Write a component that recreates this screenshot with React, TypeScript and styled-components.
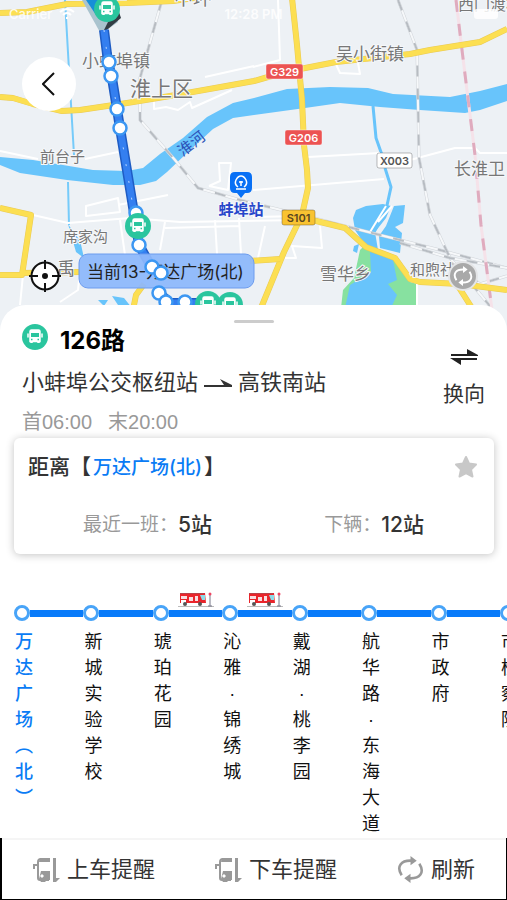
import React from "react";
import styled, { createGlobalStyle } from "styled-components";

const GlobalStyle = createGlobalStyle`
  *, *::before, *::after { box-sizing: border-box; }
  body {
    margin: 0;
    background: #fff;
    color: #333;
    font-family: "Liberation Sans", "Noto Sans CJK SC", sans-serif;
  }
  button {
    padding: 0;
    border: 0;
    background: none;
    color: inherit;
    font: inherit;
    cursor: pointer;
  }
  svg { display: block; flex: none; }
`;

const Screen = styled.main`
  display: flex;
  flex-direction: column;
  min-height: 100vh;
  overflow: hidden;
`;

const MapArea = styled.section`
  position: relative;
  height: 345px;
  overflow: hidden;
  background: #edf1f5;
`;

const MapDrawing = styled.svg`
  width: 100%;
  height: 100%;
  font-family: "Liberation Sans", "Noto Sans CJK SC", sans-serif;
`;

const StatusBar = styled.div`
  position: absolute;
  inset: 0 0 auto;
  display: grid;
  grid-template-columns: 1fr auto 1fr;
  align-items: center;
  height: 28px;
  padding: 0 9px;
  color: rgba(255, 255, 255, 0.85);
  font: 600 13px/16px Inter, "Liberation Sans", sans-serif;
`;

const Carrier = styled.span`
  display: flex;
  align-items: center;
  gap: 7px;
  font-weight: 500;
`;

const Battery = styled.span`
  justify-self: end;
  width: 24px;
  height: 10px;
  border-radius: 3px;
  background: rgba(255, 255, 255, 0.85);
`;

const FloatingButton = styled.button<{ $place: "back" | "locate" | "reload" }>`
  position: absolute;
  display: grid;
  place-items: center;
  border-radius: 50%;
  ${({ $place }) =>
    $place === "back"
      ? "left: 22px; top: 57px; width: 54px; height: 54px; background: #fff;"
      : $place === "locate"
        ? "left: 28px; top: 259px; width: 34px; height: 34px;"
        : "right: 29px; top: 261px; width: 30px; height: 30px; background: #a9a9a9; border: 2px solid #e4e5e7;"}
`;

const Sheet = styled.section`
  position: relative;
  z-index: 1;
  display: flex;
  flex: 1;
  flex-direction: column;
  margin-top: -40px;
  border-radius: 26px 26px 0 0;
  background: #fff;
`;

const Handle = styled.div`
  width: 40px;
  height: 3px;
  margin: 15px auto 1px;
  border-radius: 2px;
  background: #ccc;
`;

const Header = styled.header`
  display: flex;
  align-items: center;
  justify-content: space-between;
  padding: 0 22px;
`;

const RouteInfo = styled.div`
  display: flex;
  flex-direction: column;
  gap: 12px;
`;

const TitleRow = styled.div`
  display: flex;
  gap: 12px;
  height: 32px;
`;

const RouteName = styled.h1`
  margin: 0;
  color: #000;
  font: 700 24px/34px Inter, "Noto Sans CJK SC", sans-serif;
`;

const Terminals = styled.p`
  display: flex;
  align-items: center;
  gap: 6px;
  margin: 0;
  font-size: 22px;
  line-height: 30px;
`;

const Hours = styled.p`
  display: flex;
  gap: 16px;
  margin: 0;
  color: #999;
  font-size: 20px;
  line-height: 24px;
`;

const SwapButton = styled.button`
  display: flex;
  flex-direction: column;
  align-items: center;
  gap: 14px;
  font-size: 21px;
  line-height: 30px;
`;

const Card = styled.section`
  display: flex;
  flex-direction: column;
  gap: 28px;
  margin: 4px 13px 0 14px;
  padding: 14px 16px 14px 14px;
  border-radius: 6px;
  box-shadow: 0 1px 9px rgba(0, 0, 0, 0.24);
`;

const CardTitle = styled.div`
  display: flex;
  align-items: center;
  justify-content: space-between;
  height: 30px;
`;

const StationHeading = styled.h2`
  margin: 0;
  font-weight: 500;
  font-size: 21px;
  line-height: 30px;
`;

const CurrentStation = styled.span`
  margin: 0 2px;
  color: #0a7cf5;
  font-family: Inter, "Noto Sans CJK SC", sans-serif;
  font-size: 19px;
`;

const Arrivals = styled.dl`
  display: flex;
  justify-content: space-between;
  margin: 0;
  padding: 0 54px 0 55px;
`;

const Arrival = styled.div`
  display: flex;
  height: 30px;
  line-height: 30px;
`;

const ArrivalLabel = styled.dt`
  color: #999;
  font-size: 19px;
`;

const ArrivalValue = styled.dd`
  margin: 0;
  font: 500 21px/30px Inter, "Noto Sans CJK SC", sans-serif;
`;

const Stops = styled.ol`
  display: flex;
  flex: 1;
  margin: 36px 0 0;
  padding: 0 0 0 14px;
  overflow-x: auto;
  list-style: none;
  scrollbar-width: none;
`;

const Stop = styled.li`
  flex: 0 0 calc(100% / 7.1);
`;

const Track = styled.div`
  display: flex;
  align-items: flex-end;
  height: 31px;
`;

const Dot = styled.span`
  flex: none;
  width: 16px;
  height: 16px;
  border: 3px solid #48a4f8;
  border-radius: 50%;
  background: #fff;
`;

const Segment = styled.span`
  display: flex;
  flex: 1;
  flex-direction: column;
  align-items: center;
  gap: 3px;
  margin-bottom: 4px;
`;

const Rail = styled.span`
  width: 100%;
  height: 7px;
  background: #087bfa;
`;

const StopName = styled.button<{ $current: boolean }>`
  display: block;
  width: 20px;
  margin-top: 8px;
  color: ${({ $current }) => ($current ? "#0a7cf5" : "#111")};
  font-weight: ${({ $current }) => ($current ? 500 : 400)};
  font-size: 18px;
  line-height: 26px;
  text-align: center;
`;

const Character = styled.span`
  display: block;
`;

const Toolbar = styled.nav`
  display: flex;
  align-items: center;
  justify-content: space-between;
  height: 62px;
  padding: 2px 31px 0;
  border: solid #000;
  border-width: 0 1px 1px 2px;
  box-shadow: inset 0 2px #f5f5f5;
`;

const ToolButton = styled.button`
  display: flex;
  align-items: center;
  gap: 7px;
  font-size: 22px;
  line-height: 30px;
`;

type Point = [number, number];

const yellowRoads = [
  "M0 13L27 12L67 4L127 3L173 1L215 -5",
  "M0 97L13 98L33 104L62 111L80 110L127 103L170 96L215 88L254 81L268 77L300 69L336 62L410 54L430 50L480 42L507 29",
  "M292 -2L297 45L302 100L304 145L307 170L308 188L302 215L284 252L261 308",
  "M0 208L31 215L22 275L0 275M22 273L80 272",
  "M308 219L345 228L366 247L395 258L410 279L420 282L460 284L507 290",
  "M250 261L280 259M458 286L472 308M133 310L136 295L144 284",
];

const minorRoads = [
  "M33 215L68 223L130 218L180 222L302 220",
  "M86 206L118 198L120 212L86 216ZM118 205L168 195",
  "M120 220L125 255M165 222L160 250M165 228L240 226M215 220L217 254M239 218L241 254",
  "M23 275L20 305M80 270L78 290L60 302",
  "M278 0L280 60L253 67M205 77L254 66M154 99L154 109L166 107L178 110L190 102L192 108L232 90",
  "M335 62L340 73L360 74L358 63M308 157L380 153M410 160L455 148L475 148L480 153L507 153",
  "M253 190L384 179M253 217L300 216M265 226L258 258M320 226L322 248L292 246L296 258L285 258",
  "M378 222L392 206M370 232L386 206M209 186L220 181L219 163L231 163L228 190L209 186",
  "M0 151L38 159M85 159L118 152M417 284L417 306",
];

const railways = [
  "M162 0L140 78L140 120L175 160L198 188L240 200L310 217L380 235L440 250L507 268",
  "M398 0L417 50L419 158L430 215L450 258L490 306",
  "M400 243L450 258L507 268M450 262L480 284L507 276",
];

const routeStops: Point[] = [
  [109, 62], [111, 76], [117, 109], [120, 128], [136, 213], [139, 245],
  [152, 267], [161, 273], [159, 293], [166, 302], [185, 302],
];

const busPins: Point[] = [[107, 9], [138, 226], [208, 304], [230, 305]];

const placeLabels: { text: string; x: number; y: number; size: number }[] = [
  { text: "小蚌埠镇", x: 82, y: 67, size: 17 },
  { text: "淮上区", x: 130, y: 96, size: 21 },
  { text: "中环", x: 174, y: 5, size: 19 },
  { text: "吴小街镇", x: 336, y: 60, size: 17 },
  { text: "西门渡村", x: 458, y: 10, size: 16 },
  { text: "前台子", x: 40, y: 162, size: 15 },
  { text: "席家沟", x: 63, y: 242, size: 15 },
  { text: "禹", x: 57, y: 275, size: 18 },
  { text: "长淮卫", x: 454, y: 175, size: 17 },
  { text: "雪华乡", x: 320, y: 280, size: 17 },
  { text: "和煦社", x: 410, y: 275, size: 15 },
];

const shields = [
  { text: "G329", x: 266, y: 64, w: 37, fill: "#ec5352", ink: "#fff" },
  { text: "G206", x: 285, y: 130, w: 37, fill: "#ec5352", ink: "#fff" },
  { text: "X003", x: 377, y: 153, w: 35, fill: "#fff", ink: "#555" },
  { text: "S101", x: 282, y: 210, w: 33, fill: "#f9c331", ink: "#5a4620" },
];

const BusGlyph = () => (
  <g>
    <circle r="13" fill="#2ac59e" />
    <path
      d="M-5-5.500Q-5-7-3.500-7H3.500Q5-7 5-5.500V4.500H-5ZM-7-3V0M7-3V0"
      fill="#fff"
      stroke="#fff"
      strokeWidth="1.500"
      strokeLinecap="round"
    />
    <path d="M-4-4H4V0H-4Z" fill="#2ac59e" />
    <path d="M-3.500 4V6M3.500 4V6" stroke="#fff" strokeWidth="2.500" />
    <path d="M-4 2.500H-2.500M2.500 2.500H4" stroke="#2ac59e" strokeWidth="1.500" />
  </g>
);

const CityMap = () => (
  <MapDrawing viewBox="0 0 507 345" preserveAspectRatio="xMidYMin slice" role="img" aria-label="126路线路地图">
    <path
      d="M0 157L33 160L93 170L127 171L143 168L160 154L183 138L207 117L233 103L254 98L287 89L330 87L368 88L393 94L450 97L480 91L507 84V101L480 110L465 113L420 110L380 107L340 103L305 108L254 115L233 118L213 129L187 153L167 172L156 181L140 185L113 185L67 180L20 173L0 165Z"
      fill="#68c4fb"
    />
    <path d="M65 0L69 70L74 155M68 182L69 225" fill="none" stroke="#76cbfa" strokeWidth="2" />
    <path d="M68 224Q76 236 80 240L84 258L76 252Z M98 300L108 300L104 306ZM112 296L124 298L132 308L120 308Z" fill="#68c4fb" />
    <path d="M373 106L376 138L382 155M385 168L391 187L386 210L374 232" fill="none" stroke="#68c4fb" strokeWidth="3" />
    <path d="M353 218L356 210L366 206L383 204L391 206L386 218L375 232L378 250L365 245L355 230Z" fill="#68c4fb" />
    <path d="M394 206L405 205L403 223L395 227L402 233L400 253L380 248L379 236L386 226Z" fill="#68c4fb" />
    <path d="M354 246L359 244L357 253L353 251Z" fill="#68c4fb" />
    <path d="M364 246L395 258L410 282L417 284V308H341L343 290L354 278L360 250Z" fill="#87e1a0" />
    <path d="M370 252L393 260L397 280L388 284L397 295L391 308H345L350 285L371 272Z" fill="#68c4fb" />
    {minorRoads.map((d) => (
      <path key={d} d={d} fill="none" stroke="#fff" strokeWidth="2" strokeLinejoin="round" />
    ))}
    {railways.map((d) => (
      <g key={d} fill="none">
        <path d={d} stroke="#d0d4d9" strokeWidth="3" />
        <path d={d} stroke="#f6f8fa" strokeWidth="2" />
        <path d={d} stroke="#b7bcc2" strokeWidth="2" strokeDasharray="11 12" />
      </g>
    ))}
    <g fill="none">
      <path d="M456 0L462 50L475 155L481 225L492 310" stroke="#f5e2e9" strokeWidth="3" />
      <path d="M456 0L462 50L475 155L481 225L492 310" stroke="#dfabbe" strokeWidth="3" strokeDasharray="12 12" />
    </g>
    {yellowRoads.map((d) => (
      <g key={d} fill="none" strokeLinejoin="round">
        <path d={d} stroke="#e9ca55" strokeWidth="6" />
        <path d={d} stroke="#fcdf52" strokeWidth="5" />
      </g>
    ))}
    {placeLabels.map(({ text, x, y, size }) => (
      <text key={text} x={x} y={y} fontSize={size} fill="#777" stroke="#f6f8fa" strokeWidth="2" paintOrder="stroke">
        {text}
      </text>
    ))}
    <text x="191" y="149" fontSize="15" fill="#2c51b8" textAnchor="middle" transform="rotate(-38 191 143)">
      淮河
    </text>
    {shields.map(({ text, x, y, w, fill, ink }) => (
      <g key={text}>
        <rect x={x} y={y} width={w} height="15" rx="2" fill={fill} stroke={ink} strokeOpacity="0.4" />
        <text x={x + w / 2} y={y + 12} fontFamily="Inter, sans-serif" fontSize="11" fontWeight="600" fill={ink} textAnchor="middle">
          {text}
        </text>
      </g>
    ))}
    <path d="M235 172H247Q252 172 252 177V188Q252 193 247 193H245L241 198L237 193H235Q230 193 230 188V177Q230 172 235 172Z" fill="#0870f5" />
    <path d="M238 187Q234 184 236 180Q238 176 241 176Q244 176 246 180Q248 184 244 187M241 181V186M236 189H246M239 182H243" fill="none" stroke="#fff" strokeWidth="1.500" />
    <text x="241" y="215" fontSize="15" fontWeight="700" fill="#2746ca" stroke="#f6f8fa" strokeWidth="2" paintOrder="stroke" textAnchor="middle">
      蚌埠站
    </text>

    <path d="M82 0L101 34L118 22L110 0Z" fill="#a9c3ce" />
    <path d="M102 34L121 18L119 12L108 22Z" fill="#333d44" />
    <path d="M86 0L96 15L110 14V0Z" fill="#178fd8" />
    <g fill="none" strokeLinejoin="round">
      <path d="M104 30L108 62L112 78L117 109L120 128L134 213L139 245L152 268M159 293L170 303H240" stroke="#1e5cc4" strokeWidth="10" />
      <path d="M104 30L108 62L112 78L117 109L120 128L134 213L139 245L152 268M159 293L170 303H240" stroke="#347ff0" strokeWidth="7" />
      <path d="M104 30L108 62L112 78L117 109L120 128L134 213L139 245" stroke="#b9d7ff" strokeWidth="1" strokeDasharray="2 15" />
    </g>
    <rect x="79" y="254" width="175" height="34" rx="9" fill="#8db8fb" fillOpacity="0.940" stroke="#6c9cee" />
    <text x="87" y="278" fontFamily="Inter, 'Noto Sans CJK SC', sans-serif" fontSize="17" fill="#222">
      当前13-万达广场(北)
    </text>
    {routeStops.map(([x, y]) => (
      <circle key={`${x}-${y}`} cx={x} cy={y} r="6.500" fill="#fff" stroke="#3c97f2" strokeWidth="2.500" />
    ))}
    {busPins.map(([x, y]) => (
      <g key={`${x}-${y}`} transform={`translate(${x} ${y})`}>
        <BusGlyph />
      </g>
    ))}
  </MapDrawing>
);

const ReloadArrows = ({ size, color }: { size: number; color: string }) => (
  <svg width={size} height={size} viewBox="0 0 26 26" fill="none" aria-hidden="true">
    <path d="M4.500 18.500C-1 10 4 4 14 4.500M21.500 7.500C27 16 22 22 12 21.500" stroke={color} strokeWidth="2.500" />
    <path d="M13 0L19 4.500L13 9ZM13 17L7 21.500L13 26Z" fill={color} />
  </svg>
);

const BoardingIcon = () => (
  <svg width="27" height="26" viewBox="0 0 27 26" fill="none" aria-hidden="true">
    <path d="M17 2H8Q5 2 5 5V21Q5 23 7 23H16" stroke="#999" strokeWidth="2" />
    <path d="M7 1H17V5H6ZM8 14H17V23H14L12 25H8L6 22Z" fill="#999" />
    <path d="M8 18H10V20H8Z" fill="#fff" stroke="#fff" />
    <path d="M1 7V12M1 8H5" stroke="#999" strokeWidth="2" />
    <path d="M20 1H23V21H27L23 25H20Z" fill="#999" />
  </svg>
);

const BusPicture = () => (
  <svg width="36" height="15" viewBox="0 0 36 15" aria-label="车辆">
    <path d="M0 14.500H36" stroke="#bbb" />
    <path d="M2 1H27L28 11H2Z" fill="#e9252b" />
    <path d="M2 1.500H26" stroke="#b94248" />
    <path d="M3 4H9V7H3ZM11 5H15V9H11ZM17 4H20V9H17Z" fill="#f7dfe1" />
    <path d="M22 3H27V8H24Z" fill="#8bdce8" />
    <path d="M3 8H8V11H3Z" fill="#fff" />
    <circle cx="7" cy="12" r="2" fill="#555" />
    <circle cx="22" cy="12" r="2" fill="#555" />
    <path d="M32 3V14M30 14H34" stroke="#778" />
    <circle cx="32" cy="2" r="1.500" fill="#ee4662" />
  </svg>
);

const stops = [
  { name: "万达广场︵北︶" },
  { name: "新城实验学校" },
  { name: "琥珀花园", bus: true },
  { name: "沁雅·锦绣城", bus: true },
  { name: "戴湖·桃李园" },
  { name: "航华路·东海大道" },
  { name: "市政府" },
  { name: "市检察院" },
];

export default function App() {
  return (
    <Screen>
      <GlobalStyle />
      <MapArea>
        <CityMap />
        <StatusBar>
          <Carrier>
            Carrier
            <svg width="16" height="12" viewBox="0 0 16 12" fill="none" stroke="#fff" strokeWidth="2" aria-hidden="true">
              <path d="M1 4Q8-2 15 4M4 7Q8 3 12 7M7 10H9" />
            </svg>
          </Carrier>
          <span>12:28 PM</span>
          <Battery />
        </StatusBar>
        <FloatingButton $place="back" aria-label="返回">
          <svg width="14" height="24" viewBox="0 0 14 24" fill="none" stroke="#111" strokeWidth="2" aria-hidden="true">
            <path d="M12 1L1 12L12 23" />
          </svg>
        </FloatingButton>
        <FloatingButton $place="locate" aria-label="定位">
          <svg width="34" height="34" viewBox="0 0 34 34" fill="none" stroke="#111" strokeWidth="2" aria-hidden="true">
            <circle cx="17" cy="17" r="13.500" fill="#fff" />
            <path d="M17 1V10M17 24V33M1 17H10M24 17H33" />
            <circle cx="17" cy="17" r="2" fill="#111" />
          </svg>
        </FloatingButton>
        <FloatingButton $place="reload" aria-label="刷新地图">
          <ReloadArrows size={20} color="#fff" />
        </FloatingButton>
      </MapArea>

      <Sheet>
        <Handle />
        <Header>
          <RouteInfo>
            <TitleRow>
              <svg width="26" height="26" viewBox="-13 -13 26 26" aria-hidden="true">
                <BusGlyph />
              </svg>
              <RouteName>126路</RouteName>
            </TitleRow>
            <Terminals>
              小蚌埠公交枢纽站
              <svg width="28" height="10" viewBox="0 0 28 10" aria-label="至">
                <path d="M0 7H20L16 1L28 7V9H0Z" fill="#333" />
              </svg>
              高铁南站
            </Terminals>
            <Hours>
              <span>首06:00</span>
              <span>末20:00</span>
            </Hours>
          </RouteInfo>
          <SwapButton>
            <svg width="28" height="16" viewBox="0 0 28 16" fill="#222" aria-hidden="true">
              <path d="M1 5H17V0L28 6V7H1ZM27 9H0L11 16V11H27Z" />
            </svg>
            换向
          </SwapButton>
        </Header>

        <Card>
          <CardTitle>
            <StationHeading>
              距离【<CurrentStation>万达广场(北)</CurrentStation>】
            </StationHeading>
            <button aria-label="收藏">
              <svg width="24" height="24" viewBox="0 0 24 24" fill="#c8c8c8" stroke="#c8c8c8" strokeWidth="2" strokeLinejoin="round" aria-hidden="true">
                <path d="M12 2L15 8.500L22 9.500L17 14.500L18.500 21.500L12 18L5.500 21.500L7 14.500L2 9.500L9 8.500Z" />
              </svg>
            </button>
          </CardTitle>
          <Arrivals>
            <Arrival>
              <ArrivalLabel>最近一班：</ArrivalLabel>
              <ArrivalValue>5站</ArrivalValue>
            </Arrival>
            <Arrival>
              <ArrivalLabel>下辆：</ArrivalLabel>
              <ArrivalValue>12站</ArrivalValue>
            </Arrival>
          </Arrivals>
        </Card>

        <Stops>
          {stops.map(({ name, bus }, index) => (
            <Stop key={name}>
              <Track>
                <Dot />
                <Segment>
                  {bus && <BusPicture />}
                  <Rail />
                </Segment>
              </Track>
              <StopName $current={index === 0}>
                {Array.from(name, (character, position) => (
                  <Character key={position}>{character}</Character>
                ))}
              </StopName>
            </Stop>
          ))}
        </Stops>

        <Toolbar>
          <ToolButton>
            <BoardingIcon />
            上车提醒
          </ToolButton>
          <ToolButton>
            <BoardingIcon />
            下车提醒
          </ToolButton>
          <ToolButton>
            <ReloadArrows size={27} color="#999" />
            刷新
          </ToolButton>
        </Toolbar>
      </Sheet>
    </Screen>
  );
}
